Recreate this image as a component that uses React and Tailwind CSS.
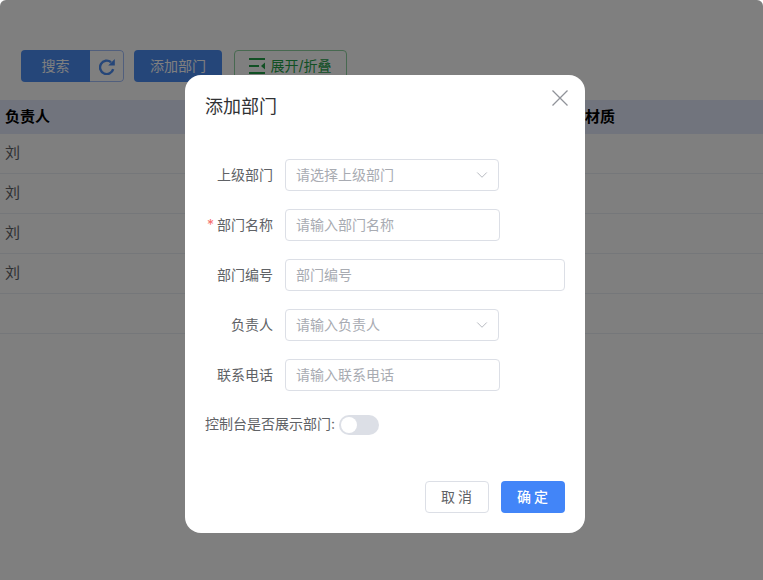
import { ChevronDown } from 'lucide-react';

const rows = ['刘', '刘', '刘', '刘', ''];

function FormRow({ label, required, children }) {
  return (
    <div className="flex items-center mb-[18px]">
      <label className="w-[68px] mr-3 text-right text-sm text-[#606266] leading-8 whitespace-nowrap">
        {required && <span className="text-[#f56c6c] mr-[3px]">*</span>}
        {label}
      </label>
      {children}
    </div>
  );
}

function TextField({ placeholder, width, select }) {
  return (
    <div className={`${width} h-8 pl-[10px] pr-[11px] flex items-center justify-between border border-[#dcdfe6] rounded text-sm text-[#a8abb2]`}>
      <span>{placeholder}</span>
      {select && <ChevronDown size={18} strokeWidth={1.1} className="text-[#a8abb2] mr-[-4px]" />}
    </div>
  );
}

export default function App() {
  return (
    <div className="relative w-[763px] h-[580px] overflow-hidden bg-white font-['Inter','Noto_Sans_CJK_SC',sans-serif]">
      {/* page behind the dialog */}
      <div className="pt-[50px]">
        <div className="flex items-center h-8 pl-[21px] text-sm">
          <div className="flex h-8 w-[103px] rounded overflow-hidden">
            <button className="w-[69px] bg-[#4b8cf2] text-white">搜索</button>
            <button className="w-[34px] flex items-center justify-center border border-l-0 border-[#a3bffb] rounded-r text-[#4b8cf2]">
              <svg width="16" height="17" viewBox="0 0 16 17" fill="none">
                <path d="M14.2 11.2A6.7 6.7 0 1 1 12 4.2" stroke="currentColor" strokeWidth="2.4" />
                <path d="M15.8 1v6.6H9.2z" fill="currentColor" />
              </svg>
            </button>
          </div>
          <button className="ml-[10px] w-[88px] h-8 rounded bg-[#4b8cf2] text-white">添加部门</button>
          <button className="ml-3 w-[113px] h-8 flex items-center justify-center gap-[5px] rounded border border-[#8fd3a0] text-[#23a048]">
            <svg width="16" height="16" viewBox="0 0 16 16" fill="none">
              <path d="M0 1h16M0 8h10M0 15h16" stroke="currentColor" strokeWidth="2" />
              <path d="M16 4.5v7L12 8z" fill="currentColor" />
            </svg>
            展开/折叠
          </button>
        </div>
        <div className="mt-[18px] h-[34px] flex items-center justify-between pl-[5px] bg-[#e2e8fb] text-[15px] font-bold text-black">
          <span>负责人</span>
          <span className="w-[178px]">材质</span>
        </div>
        {rows.map((name, i) => (
          <div key={i} className="h-10 pl-[5px] flex items-center border-b border-[#ebeef5] text-[15px] text-[#606266]">
            {name}
          </div>
        ))}
      </div>

      {/* mask + dialog */}
      <div className="absolute inset-0 bg-black/50 rounded-t-md" />
      <div className="absolute left-[185px] top-[75px] w-[400px] h-[458px] px-5 bg-white rounded-2xl">
        <div className="relative h-[84px] pt-[18px]">
          <h2 className="text-lg leading-[27px] text-[#303133]">添加部门</h2>
          <svg width="16" height="16" viewBox="0 0 16 16" fill="none" className="absolute right-[-3px] top-[15px] text-[#909399]">
            <path d="M0.5 0.5l15 15M15.5 0.5l-15 15" stroke="currentColor" strokeWidth="1.3" />
          </svg>
        </div>
        <FormRow label="上级部门">
          <TextField placeholder="请选择上级部门" width="w-[214px]" select />
        </FormRow>
        <FormRow label="部门名称" required>
          <TextField placeholder="请输入部门名称" width="w-[215px]" />
        </FormRow>
        <FormRow label="部门编号">
          <TextField placeholder="部门编号" width="w-[280px]" />
        </FormRow>
        <FormRow label="负责人">
          <TextField placeholder="请输入负责人" width="w-[214px]" select />
        </FormRow>
        <FormRow label="联系电话">
          <TextField placeholder="请输入联系电话" width="w-[215px]" />
        </FormRow>
        <div className="flex items-center h-5 mt-[24px] text-sm text-[#606266]">
          <span className="w-[134px] pb-[2px] whitespace-nowrap">控制台是否展示部门:</span>
          <div className="w-10 h-5 p-0.5 rounded-full bg-[#dcdfe6]">
            <div className="w-4 h-4 rounded-full bg-white" />
          </div>
        </div>
        <div className="flex justify-end gap-3 mt-[46px] text-sm">
          <button className="w-16 h-8 pl-[2px] rounded border border-[#dcdfe6] text-[#606266] tracking-[3px]">取消</button>
          <button className="w-16 h-8 pl-[2px] rounded bg-[#4285f8] text-white font-medium tracking-[3px]">确定</button>
        </div>
      </div>
    </div>
  );
}
